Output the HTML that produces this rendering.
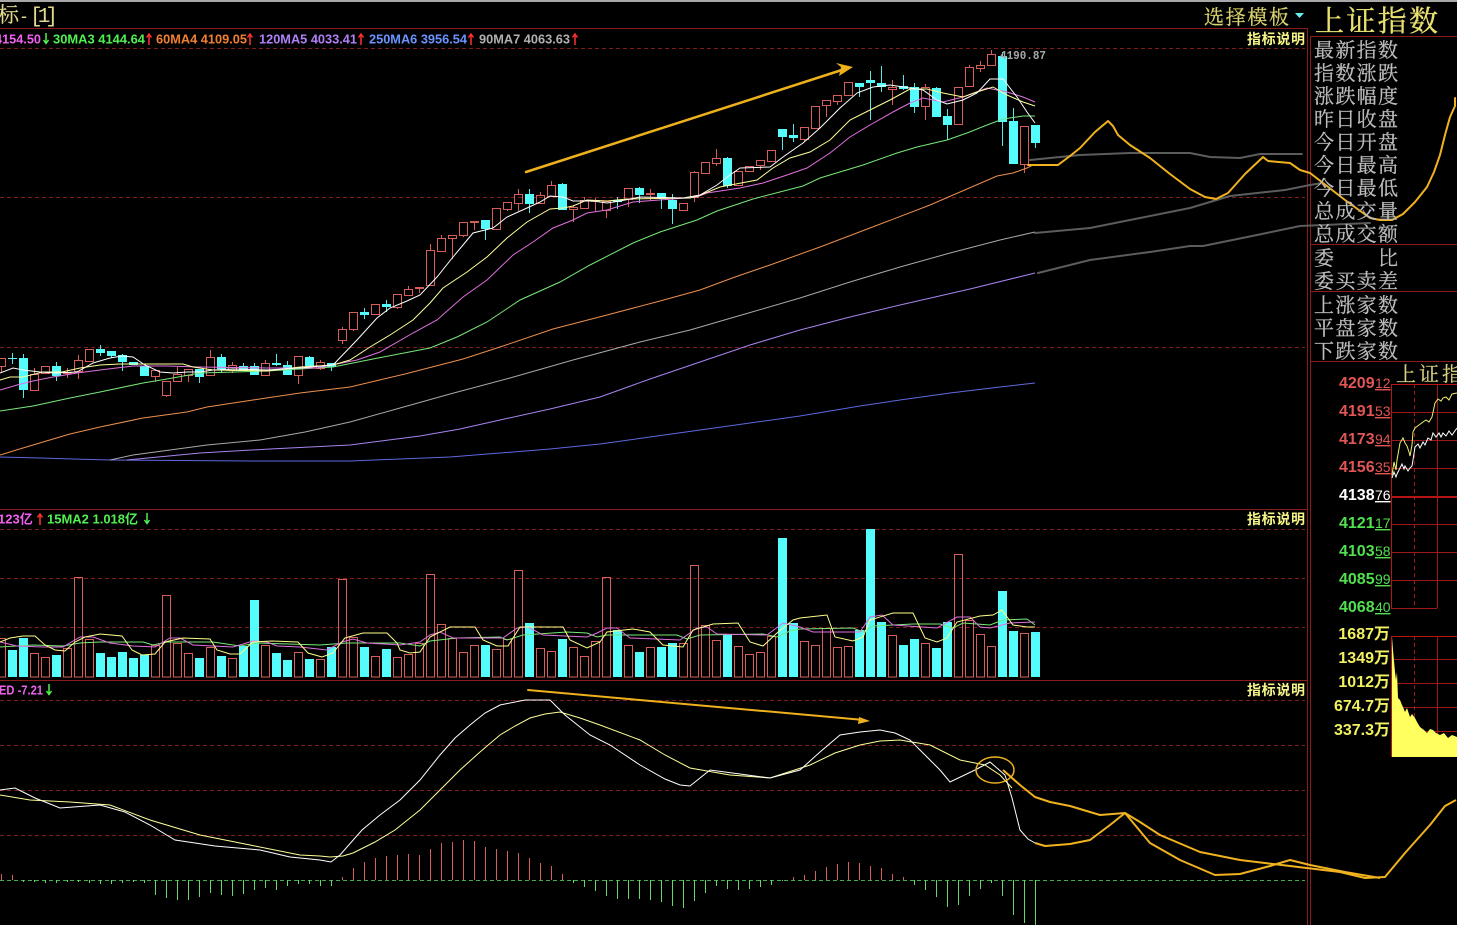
<!DOCTYPE html>
<html lang="zh">
<head>
<meta charset="utf-8">
<title>上证指数</title>
<style>
html,body{margin:0;padding:0;background:#000;width:1457px;height:925px;overflow:hidden}
svg{display:block;filter:blur(.3px)}
.leg{font:bold 13px "Liberation Sans","Noto Sans CJK SC",sans-serif}
.cn{font-family:"Liberation Serif","Noto Serif CJK SC",serif;font-size:20px;fill:#bcbcbc;stroke:#bcbcbc;stroke-width:.25px}
.help{font:bold 14px "Liberation Sans","Noto Sans CJK SC",sans-serif;fill:#f4f488}
.num{font:bold 16px "Liberation Sans","Noto Sans CJK SC",sans-serif}
.sm{font:14px "Liberation Sans",sans-serif;text-decoration:underline}
.ln{fill:none;stroke-width:1}
</style>
</head>
<body>
<svg width="1457" height="925" viewBox="0 0 1457 925" xmlns="http://www.w3.org/2000/svg">
<rect width="1457" height="925" fill="#000"/>
<rect width="1457" height="2" fill="#a8a8a8"/>

<!-- frames -->
<g fill="none" stroke="#8c1c1c">
<path d="M0 28.5H1307.5M0 509.5H1307.5M0 680.5H1307.5M1307.5 28V925M1310.5 36V925M1310 36.5H1457M1310 244.5H1457M1310 291.5H1457M1310 361.5H1457"/>
<path stroke-dasharray="4 3" stroke="#801c1c" d="M0 48.5H1305M0 197.5H1305M0 347.5H1305M0 529.5H1305M0 578.5H1305M0 627.5H1305M0 700.5H1305M0 745.5H1305M0 790.5H1305M0 835.5H1305"/>
<path stroke-dasharray="4 3" stroke="#3fae4a" d="M0 880.5H1305"/>
</g>

<!-- candles: hollow red -->
<path class="ln" stroke="#d65f5a" d="M-2.5 358.5h8v8h-8zM1.5 366.5V372
M30.5 374.5h8v16h-8zM34.5 368V374
M41.5 366.5h8v7h-8z
M63.5 372.5h8v1h-8zM67.5 368V378
M74.5 360.5h8v11h-8zM78.5 355V360M78.5 372V379
M85.5 349.5h8v12h-8z
M151.5 370.5h8v6h-8zM155.5 377V382
M162.5 381.5h8v14h-8zM166.5 396V397
M173.5 374.5h8v7h-8zM177.5 367V374
M184.5 369.5h8v6h-8zM188.5 376V382
M206.5 357.5h8v18h-8zM210.5 350V357
M228.5 365.5h8v5h-8zM232.5 362V365M232.5 371V373
M261.5 363.5h8v12h-8zM265.5 360V363
M294.5 356.5h8v19h-8zM298.5 376V384
M316.5 362.5h8v6h-8zM320.5 360V362M320.5 369V370
M338.5 329.5h8v11h-8zM342.5 327V329M342.5 341V344
M349.5 312.5h8v17h-8zM353.5 330V331
M371.5 304.5h8v10h-8z
M393.5 294.5h8v13h-8zM397.5 308V309
M404.5 289.5h8v6h-8zM408.5 286V289
M415.5 287.5h8v1h-8zM419.5 289V293
M426.5 250.5h8v35h-8zM430.5 244V250
M437.5 238.5h8v13h-8zM441.5 235V238
M448.5 235.5h8v3h-8zM452.5 239V259
M459.5 222.5h8v13h-8zM463.5 236V237
M470.5 221.5h8v1h-8zM474.5 223V230
M492.5 208.5h8v21h-8z
M503.5 202.5h8v7h-8zM507.5 210V211
M514.5 194.5h8v9h-8zM518.5 189V194M518.5 204V211
M536.5 195.5h8v8h-8zM540.5 192V195
M547.5 185.5h8v11h-8zM551.5 181V185
M569.5 207.5h8v2h-8zM573.5 205V207M573.5 210V222
M580.5 200.5h8v8h-8zM584.5 197V200
M591.5 200.5h8v1h-8zM595.5 198V200M595.5 202V212
M602.5 201.5h8v9h-8zM606.5 211V218
M624.5 188.5h8v11h-8zM628.5 200V207
M646.5 193.5h8v1h-8zM650.5 189V193M650.5 195V200
M679.5 203.5h8v7h-8z
M690.5 172.5h8v25h-8zM694.5 171V172M694.5 198V202
M701.5 162.5h8v11h-8z
M712.5 158.5h8v5h-8zM716.5 149V158M716.5 164V166
M734.5 171.5h8v14h-8z
M745.5 166.5h8v5h-8z
M756.5 160.5h8v5h-8zM760.5 166V170
M767.5 150.5h8v11h-8z
M800.5 127.5h8v12h-8zM804.5 140V142
M811.5 106.5h8v22h-8z
M822.5 100.5h8v5h-8zM826.5 106V117
M833.5 95.5h8v6h-8zM837.5 102V105
M844.5 82.5h8v13h-8z
M888.5 87.5h8v2h-8zM892.5 80V87M892.5 90V105
M921.5 87.5h8v19h-8zM925.5 84V87M925.5 107V120
M954.5 87.5h8v37h-8z
M965.5 67.5h8v19h-8zM969.5 65V67
M976.5 65.5h8v3h-8zM980.5 61V65M980.5 69V72
M987.5 54.5h8v11h-8zM991.5 50V54
M1020.5 126.5h8v38h-8zM1024.5 165V173"/>
<!-- candles: cyan wicks -->
<path class="ln" stroke="#56e8e8" d="M12.5 353V364M23.5 354V398M56.5 362V381M100.5 345V356M111.5 351V358M122.5 354V371M144.5 366V376M199.5 369V383M221.5 354V373M243.5 363V371M254.5 363V375M276.5 354V366M287.5 361V375M309.5 356V366M331.5 363V371M364.5 308V319M386.5 300V312M485.5 220V240M529.5 189V213M562.5 183V210M617.5 197V209M639.5 187V203M661.5 193V209M672.5 194V224M727.5 157V188M782.5 129V150M793.5 124V142M859.5 83V97M870.5 71V120M881.5 66V92M903.5 75V90M914.5 83V113M936.5 87V117M947.5 109V140M1002.5 52V146M1013.5 108V164M1035.5 125V148"/>
<!-- candles: cyan bodies -->
<path fill="#55fcfc" d="M8 358h9v1h-9zM19 358h9v32h-9zM52 366h9v10h-9zM96 349h9v4h-9zM107 351h9v5h-9zM118 355h9v7h-9zM129 362h9v3h-9zM140 366h9v10h-9zM195 369h9v8h-9zM217 357h9v12h-9zM239 366h9v5h-9zM250 366h9v9h-9zM272 363h9v2h-9zM283 365h9v10h-9zM305 357h9v9h-9zM327 363h9v4h-9zM360 312h9v3h-9zM382 304h9v3h-9zM481 220h9v9h-9zM525 194h9v10h-9zM558 184h9v26h-9zM613 200h9v2h-9zM635 188h9v7h-9zM657 193h9v5h-9zM668 200h9v9h-9zM723 158h9v28h-9zM778 129h9v8h-9zM789 135h9v3h-9zM855 83h9v4h-9zM866 80h9v3h-9zM877 83h9v4h-9zM899 86h9v3h-9zM910 87h9v20h-9zM932 88h9v29h-9zM943 116h9v9h-9zM998 56h9v66h-9zM1009 121h9v43h-9zM1031 125h9v18h-9z"/>

<!-- price moving averages -->
<g class="ln">
<polyline stroke="#5f68e0" points="0,457 40,458 73,459 110,460 250,461 350,461 400,459 450,457 500,453 550,449 600,444 650,437 700,430 750,423 800,416 860,406 900,400 950,393 1000,387 1035,383"/>
<polyline stroke="#a884f0" points="127,460 200,453 270,449 350,445 420,436 460,429 500,420 550,409 600,397 650,379 700,362 750,345 800,330 850,317 900,305 970,289 1035,273"/>
<polyline stroke="#a8a8a8" points="110,460 133,455 207,445 260,440 305,432 350,422 400,408 450,394 510,378 573,360 640,342 690,330 745,314 800,298 850,282 900,267 950,253 1000,240 1035,232"/>
<polyline stroke="#ec8f4d" points="0,455 23,448 43,442 70,434 100,427 143,418 187,412 207,407 253,400 300,393 350,387 405,374 463,359 500,347 553,329 607,315 660,301 700,290 735,277 770,265 820,247 870,228 930,205 967,189 997,176 1013,173 1027,168 1033,165"/>
<polyline stroke="#78e878" points="0,411 33,406 70,398 100,392 143,383 167,379 200,373 267,371 333,367 373,359 430,348 457,337 487,322 520,300 560,282 590,265 633,243 660,232 697,220 717,211 753,199 803,186 820,178 863,165 897,153 917,147 947,140 967,133 987,125 1003,119 1023,116 1035,116"/>
<polyline stroke="#e070e0" points="0,390 17,385 33,381 53,377 77,373 100,370 133,366 167,366 200,367 267,368 317,368 357,360 380,352 413,333 437,320 463,297 487,280 513,255 533,242 553,228 573,220 587,213 607,210 633,202 673,199 697,197 707,193 740,188 763,183 787,175 807,168 830,153 850,137 870,125 893,112 910,103 923,98 943,102 963,97 987,88 1007,92 1023,97 1035,102"/>
<polyline stroke="#ffff99" points="0,380 10,377 23,377 43,372 62,372 80,368 100,365 120,364 183,364 193,367 213,370 267,371 300,367 333,365 350,360 370,347 390,335 413,320 430,303 443,288 467,272 487,257 507,238 527,222 550,209 563,208 573,206 587,200 607,201 627,199 690,198 698,196 720,187 757,180 773,168 790,158 810,152 830,140 850,120 870,110 890,100 910,89 927,89 943,93 963,97 977,92 993,87 1007,95 1023,102 1035,106"/>
<polyline stroke="#ffffff" points="0,373 13,368 23,370 40,372 55,373 77,372 93,363 110,358 122,356 133,357 145,365 160,372 173,373 187,372 200,372 213,370 233,369 267,370 300,368 333,365 357,340 377,318 390,308 407,301 420,295 437,277 453,257 473,233 493,228 507,217 527,208 540,202 550,196 563,197 573,201 593,201 607,203 620,201 640,197 683,198 700,195 717,185 730,175 740,168 770,167 783,157 803,143 820,128 840,108 857,93 873,87 890,85 910,88 923,90 937,100 947,104 963,100 977,93 990,79 1003,79 1017,97 1027,112 1035,123"/>
</g>

<!-- hand-drawn overlays -->
<g fill="none" stroke-linejoin="round" stroke-linecap="round">
<polyline stroke="#5c5c5c" stroke-width="2" points="1030,160 1080,155 1130,153 1190,153 1210,157 1240,158 1260,154 1302,154"/>
<polyline stroke="#5c5c5c" stroke-width="2" points="1035,233 1090,228 1140,218 1190,208 1230,196 1285,190 1310,185 1322,183"/>
<polyline stroke="#5c5c5c" stroke-width="2" points="1038,273 1090,260 1150,252 1190,246 1203,246 1257,235 1300,226 1370,223"/>
<polyline stroke="#f0b21e" stroke-width="2" points="1028,165 1058,165 1070,156 1080,148 1095,132 1108,121 1113,126 1118,135 1130,145 1150,158 1170,174 1190,189 1205,197 1216,199 1228,193 1245,174 1263,157 1268,161 1290,163 1300,170 1310,173 1323,183 1345,200 1370,218 1380,220 1392,220 1403,214 1415,202 1427,187 1434,172 1440,155 1445,135 1450,117 1455,106 1455,98"/>
<path stroke="#eeb11c" stroke-width="2.5" d="M526 172L848 68"/>
<path fill="#eeb11c" stroke="none" d="M853 67L839 76L841 67L836 63Z"/>
<path stroke="#eeb11c" stroke-width="2" d="M528 690L864 720"/>
<path fill="#eeb11c" stroke="none" d="M870 721L858 724L859 717Z"/>
</g>

<text x="1000" y="59" font-family="Liberation Mono,monospace" font-weight="bold" font-size="12" fill="#a8a8a8" textLength="46" lengthAdjust="spacingAndGlyphs">4190.87</text>

<!-- volume -->
<path class="ln" stroke="#d65f5a" d="M-2.5 638.5h8V677h-8zM30.5 653.5h8V677h-8zM41.5 657.5h8V677h-8zM63.5 648.5h8V677h-8zM74.5 577.5h8V677h-8zM85.5 639.5h8V677h-8zM151.5 645.5h8V677h-8zM162.5 595.5h8V677h-8zM173.5 643.5h8V677h-8zM184.5 653.5h8V677h-8zM206.5 647.5h8V677h-8zM228.5 658.5h8V677h-8zM261.5 645.5h8V677h-8zM294.5 652.5h8V677h-8zM316.5 659.5h8V677h-8zM338.5 579.5h8V677h-8zM349.5 637.5h8V677h-8zM371.5 656.5h8V677h-8zM393.5 657.5h8V677h-8zM404.5 654.5h8V677h-8zM415.5 643.5h8V677h-8zM426.5 574.5h8V677h-8zM437.5 624.5h8V677h-8zM448.5 638.5h8V677h-8zM459.5 652.5h8V677h-8zM470.5 645.5h8V677h-8zM492.5 649.5h8V677h-8zM503.5 639.5h8V677h-8zM514.5 570.5h8V677h-8zM536.5 648.5h8V677h-8zM547.5 651.5h8V677h-8zM569.5 647.5h8V677h-8zM580.5 656.5h8V677h-8zM591.5 641.5h8V677h-8zM602.5 577.5h8V677h-8zM624.5 645.5h8V677h-8zM646.5 647.5h8V677h-8zM679.5 643.5h8V677h-8zM690.5 565.5h8V677h-8zM701.5 625.5h8V677h-8zM712.5 640.5h8V677h-8zM734.5 646.5h8V677h-8zM745.5 654.5h8V677h-8zM756.5 652.5h8V677h-8zM767.5 636.5h8V677h-8zM800.5 641.5h8V677h-8zM811.5 645.5h8V677h-8zM822.5 628.5h8V677h-8zM833.5 647.5h8V677h-8zM844.5 646.5h8V677h-8zM888.5 635.5h8V677h-8zM921.5 643.5h8V677h-8zM954.5 554.5h8V677h-8zM965.5 620.5h8V677h-8zM976.5 634.5h8V677h-8zM987.5 646.5h8V677h-8zM1020.5 633.5h8V677h-8z"/>
<path fill="#55fcfc" d="M8 650h9V677h-9zM19 638h9V677h-9zM52 655h9V677h-9zM96 653h9V677h-9zM107 657h9V677h-9zM118 652h9V677h-9zM129 658h9V677h-9zM140 655h9V677h-9zM195 658h9V677h-9zM217 656h9V677h-9zM239 646h9V677h-9zM250 600h9V677h-9zM272 653h9V677h-9zM283 660h9V677h-9zM305 659h9V677h-9zM327 647h9V677h-9zM360 647h9V677h-9zM382 649h9V677h-9zM481 645h9V677h-9zM525 623h9V677h-9zM558 639h9V677h-9zM613 630h9V677h-9zM635 652h9V677h-9zM657 647h9V677h-9zM668 643h9V677h-9zM723 635h9V677h-9zM778 538h9V677h-9zM789 623h9V677h-9zM855 630h9V677h-9zM866 529h9V677h-9zM877 622h9V677h-9zM899 645h9V677h-9zM910 639h9V677h-9zM932 648h9V677h-9zM943 622h9V677h-9zM998 591h9V677h-9zM1009 631h9V677h-9zM1031 632h9V677h-9z"/>
<g class="ln">
<polyline stroke="#78e878" points="0,647 33,645 63,646 80,643 100,642 143,642 153,645 167,642 213,642 240,646 257,643 320,645 347,643 400,643 420,646 430,641 457,638 500,637 507,640 523,635 567,632 587,633 597,637 607,635 677,635 687,639 700,635 763,634 777,637 790,631 800,629 853,628 863,632 873,626 913,624 940,624 953,628 963,623 990,625 1003,620 1027,619 1035,625"/>
<polyline stroke="#e070e0" points="0,642 17,646 43,647 63,647 80,637 93,637 110,643 133,646 155,647 170,638 180,638 193,645 233,647 253,641 267,642 277,646 300,647 327,650 342,642 353,639 367,643 400,645 420,642 430,635 440,632 453,638 503,638 517,628 528,627 543,635 587,637 597,633 607,628 617,628 630,638 680,640 697,628 707,627 717,634 767,635 783,623 800,627 813,632 860,632 870,617 882,615 893,625 937,628 957,617 970,617 980,627 990,628 1010,623 1035,622"/>
<polyline stroke="#ffff88" points="0,642 10,638 23,636 35,636 45,645 55,650 65,651 75,642 85,637 100,634 122,636 132,650 142,655 155,654 165,642 183,638 210,639 217,650 230,654 240,654 253,642 272,641 298,642 308,653 322,657 333,653 345,638 363,633 387,633 397,643 400,650 410,653 420,652 430,637 450,627 475,627 483,640 497,646 508,646 520,627 563,627 570,640 587,648 600,642 607,632 633,629 650,632 663,645 683,647 693,630 713,624 738,623 750,642 763,646 777,633 793,620 800,618 827,615 835,637 853,641 863,637 870,620 893,613 913,613 925,638 937,642 947,638 957,622 980,616 993,615 1002,610 1013,625 1027,627 1035,627"/>
</g>

<!-- MACD histogram -->
<path class="ln" stroke="#d65f5a" d="M1.5 880V874M12.5 880V875M342.5 880V877M353.5 880V868M364.5 880V862M375.5 880V858M386.5 880V856M397.5 880V855M408.5 880V854M419.5 880V855M430.5 880V849M441.5 880V843M452.5 880V842M463.5 880V840M474.5 880V841M485.5 880V847M496.5 880V849M507.5 880V851M518.5 880V853M529.5 880V858M540.5 880V863M551.5 880V866M562.5 880V874M793.5 880V877M804.5 880V875M815.5 880V871M826.5 880V867M837.5 880V864M848.5 880V862M859.5 880V863M870.5 880V866M881.5 880V868M892.5 880V874M903.5 880V877"/>
<path class="ln" stroke="#66d86c" d="M23.5 880V882M34.5 880V882M45.5 880V883M56.5 880V883M67.5 880V882M78.5 880V882M89.5 880V883M100.5 880V884M111.5 880V884M122.5 880V883M133.5 880V882M144.5 880V883M155.5 880V895M166.5 880V898M177.5 880V900M188.5 880V900M199.5 880V897M210.5 880V893M221.5 880V895M232.5 880V896M243.5 880V894M254.5 880V890M265.5 880V888M276.5 880V890M287.5 880V886M298.5 880V884M309.5 880V884M320.5 880V886M331.5 880V886M573.5 880V883M584.5 880V887M595.5 880V891M606.5 880V896M617.5 880V899M628.5 880V899M639.5 880V899M650.5 880V900M661.5 880V902M672.5 880V906M683.5 880V908M694.5 880V901M705.5 880V893M716.5 880V886M727.5 880V889M738.5 880V890M749.5 880V889M760.5 880V887M771.5 880V885M782.5 880V881M914.5 880V885M925.5 880V890M936.5 880V897M947.5 880V907M958.5 880V905M969.5 880V896M980.5 880V889M991.5 880V883M1002.5 880V896M1013.5 880V915M1024.5 880V923M1035.5 880V925"/>

<!-- MACD lines -->
<g class="ln">
<polyline stroke="#ffff99" points="0,795 30,800 70,802 110,805 150,820 200,835 250,845 300,855 320,856 330,857 343,856 353,853 375,842 395,830 420,810 440,790 460,770 480,752 500,735 515,726 530,718 545,714 560,712 580,718 600,725 640,740 665,755 690,768 730,775 770,778 810,765 835,753 860,745 880,741 900,740 930,745 960,760 985,765 1000,775 1012,788"/>
<polyline stroke="#ffffff" points="0,790 15,788 35,798 60,808 100,805 125,812 150,825 175,840 215,846 260,850 290,857 320,860 331,862 340,855 362,830 380,815 400,800 420,780 440,755 455,738 470,725 485,713 500,705 525,700 550,700 565,715 590,735 610,745 640,765 665,779 680,785 690,786 700,778 710,770 740,774 770,778 800,770 820,752 840,735 860,732 880,730 895,733 910,740 925,755 940,770 950,782 975,770 990,762 1005,775 1012,798 1020,830 1028,839 1035,843"/>
</g>
<g fill="none" stroke="#f0b21e" stroke-width="2" stroke-linejoin="round">
<ellipse cx="995" cy="770" rx="19" ry="13" stroke-width="1.5"/>
<polyline points="1003,770 1020,785 1035,797 1050,802 1070,806 1100,815 1125,813 1140,822 1160,835 1200,852 1240,860 1290,866 1340,872 1365,878 1385,877 1405,853 1430,825 1445,806 1456,800"/>
<polyline points="1035,843 1045,846 1070,844 1090,840 1110,825 1125,813 1135,825 1150,843 1180,860 1215,875 1240,874 1270,866 1290,860 1310,865 1345,872 1380,878"/>
</g>

<!-- header text -->
<text x="-2" y="22" font-family="Liberation Serif,Noto Serif CJK SC,serif" font-size="21" fill="#e2d98c" stroke="#e2d98c" stroke-width=".2">标</text>
<text x="21" y="22" font-family="Liberation Sans,sans-serif" font-size="18" fill="#e2d98c">-</text>
<text x="30" y="22" font-family="Liberation Mono,monospace" font-size="21" fill="#e2d98c" textLength="28">[1]</text>
<text x="1204" y="24" font-family="Liberation Serif,Noto Serif CJK SC,serif" font-size="20" fill="#dcd46e" stroke="#dcd46e" stroke-width=".25" textLength="85">选择模板</text>
<path d="M1295 13h9l-4.500 5z" fill="#66f0f0"/>
<text x="1315" y="31" font-family="Liberation Serif,Noto Serif CJK SC,serif" font-size="29" fill="#e8e070" stroke="#e8e070" stroke-width=".35" textLength="123">上证指数</text>

<!-- legend -->
<g class="leg">
<text x="-5" y="43.500" fill="#f060f0" textLength="46" lengthAdjust="spacingAndGlyphs">4154.50</text>
<text x="53" y="43.500" fill="#50f050" textLength="92" lengthAdjust="spacingAndGlyphs">30MA3 4144.64</text>
<text x="156" y="43.500" fill="#f08030" textLength="91" lengthAdjust="spacingAndGlyphs">60MA4 4109.05</text>
<text x="259" y="43.500" fill="#b080f8" textLength="98" lengthAdjust="spacingAndGlyphs">120MA5 4033.41</text>
<text x="369" y="43.500" fill="#6a94ff" textLength="98" lengthAdjust="spacingAndGlyphs">250MA6 3956.54</text>
<text x="479" y="43.500" fill="#b0b0b0" textLength="91" lengthAdjust="spacingAndGlyphs">90MA7 4063.63</text>
<text x="-2" y="523.500" fill="#f060f0">123亿</text>
<text x="47" y="523.500" fill="#50f050" textLength="91" lengthAdjust="spacingAndGlyphs">15MA2 1.018亿</text>
<text x="-1" y="694.500" fill="#f060f0" textLength="44" lengthAdjust="spacingAndGlyphs">ED -7.21</text>
</g>
<!-- legend arrows -->
<g fill="none" stroke-width="1.500">
<path stroke="#50f050" d="M46 33v10M43.500 40l2.500 3.500 2.500-3.500M147 513v10M144.500 520l2.500 3.500 2.500-3.500M49 684v10M46.500 691l2.500 3.500 2.500-3.500"/>
<path stroke="#ff3030" d="M149 34v11M146.500 37.500l2.500-3.500 2.500 3.500M250 34v11M247.500 37.500l2.500-3.500 2.500 3.500M361 34v11M358.500 37.500l2.500-3.500 2.500 3.500M471 34v11M468.500 37.500l2.500-3.500 2.500 3.500M575 34v11M572.500 37.500l2.500-3.500 2.500 3.500M40 514v11M37.500 517.500l2.500-3.500 2.500 3.500"/>
</g>

<text class="help" x="1247" y="44" textLength="58">指标说明</text>
<text class="help" x="1247" y="524" textLength="58">指标说明</text>
<text class="help" x="1247" y="695" textLength="58">指标说明</text>

<!-- quote labels -->
<g class="cn">
<text x="1314" y="57" textLength="84">最新指数</text>
<text x="1314" y="80" textLength="84">指数涨跌</text>
<text x="1314" y="103" textLength="84">涨跌幅度</text>
<text x="1314" y="126" textLength="84">昨日收盘</text>
<text x="1314" y="149" textLength="84">今日开盘</text>
<text x="1314" y="172" textLength="84">今日最高</text>
<text x="1314" y="195" textLength="84">今日最低</text>
<text x="1314" y="218" textLength="84">总成交量</text>
<text x="1314" y="241" textLength="84">总成交额</text>
<text x="1314" y="265">委</text>
<text x="1378" y="265">比</text>
<text x="1314" y="288" textLength="84">委买卖差</text>
<text x="1314" y="312" textLength="84">上涨家数</text>
<text x="1314" y="335" textLength="84">平盘家数</text>
<text x="1314" y="358" textLength="84">下跌家数</text>
</g>

<!-- mini price chart -->
<text x="1396" y="381" font-family="Liberation Serif,Noto Serif CJK SC,serif" font-size="20" fill="#d8d080" stroke="#d8d080" stroke-width=".2" textLength="66">上证指</text>
<g fill="none" stroke="#a01818">
<path d="M1391 412.500H1457M1391 440.500H1457M1391 468.500H1457M1391 524.500H1457M1391 552.500H1457M1391 580.500H1457M1391 608.500H1437M1437.500 384V608"/>
<path stroke-dasharray="4 3" d="M1414.500 384V608"/>
<path stroke="#b81414" stroke-width="2" d="M1391 497H1457"/>
<path stroke="#b81414" d="M1391 384.500H1457M1391.500 384V608"/>
</g>
<polyline class="ln" stroke="#f0f070" points="1392,475 1394,462 1396,470 1397,460 1400,443 1403,438 1405,443 1407,446 1409,452 1410,456 1412,445 1413,432 1415,428 1419,425 1423,422 1426,420 1429,422 1432,417 1435,403 1438,399 1441,401 1443,398 1446,397 1449,400 1452,394 1457,393"/>
<polyline class="ln" stroke="#ffffff" points="1392,478 1394,472 1396,477 1397,474 1400,468 1402,464 1404,469 1405,466 1408,471 1410,468 1412,466 1413,460 1415,447 1418,444 1420,448 1423,442 1425,445 1428,438 1431,440 1433,433 1436,437 1439,433 1441,437 1443,433 1446,436 1449,431 1452,435 1457,428"/>

<!-- mini volume chart -->
<g fill="none" stroke="#a01818">
<path d="M1391 659.500H1457M1391 683.500H1457M1391 707.500H1457M1391 731.500H1457M1437.500 636V757"/>
<path stroke-dasharray="4 3" d="M1414.500 636V757"/>
<path stroke="#b81414" d="M1391 636.500H1457M1391.500 636V757"/>
</g>
<polygon fill="#ffff60" points="1392,757 1392,637 1393,650 1395,672 1396,680 1397,672 1398,698 1400,700 1402,705 1403,707 1405,712 1407,708 1410,717 1412,714 1415,718 1417,722 1420,727 1424,730 1427,733 1430,729 1433,730 1436,733 1440,735 1444,733 1448,738 1452,735 1457,737 1457,757"/>

<!-- axis labels -->
<g class="num" text-anchor="start">
<text x="1339" y="388" fill="#e05555">4209</text><text class="sm" x="1375" y="388" fill="#e05555">12</text>
<text x="1339" y="416" fill="#e05555">4191</text><text class="sm" x="1375" y="416" fill="#e05555">53</text>
<text x="1339" y="444" fill="#e05555">4173</text><text class="sm" x="1375" y="444" fill="#e05555">94</text>
<text x="1339" y="472" fill="#e05555">4156</text><text class="sm" x="1375" y="472" fill="#e05555">35</text>
<text x="1339" y="500" fill="#ffffff">4138</text><text class="sm" x="1375" y="500" fill="#ffffff">76</text>
<text x="1339" y="528" fill="#50e050">4121</text><text class="sm" x="1375" y="528" fill="#50e050">17</text>
<text x="1339" y="556" fill="#50e050">4103</text><text class="sm" x="1375" y="556" fill="#50e050">58</text>
<text x="1339" y="584" fill="#50e050">4085</text><text class="sm" x="1375" y="584" fill="#50e050">99</text>
<text x="1339" y="612" fill="#50e050">4068</text><text class="sm" x="1375" y="612" fill="#50e050">40</text>
</g>
<g class="num" fill="#f0f060" text-anchor="end">
<text x="1390" y="639">1687万</text>
<text x="1390" y="663">1349万</text>
<text x="1390" y="687">1012万</text>
<text x="1390" y="711">674.7万</text>
<text x="1390" y="735">337.3万</text>
</g>
</svg>
</body>
</html>
